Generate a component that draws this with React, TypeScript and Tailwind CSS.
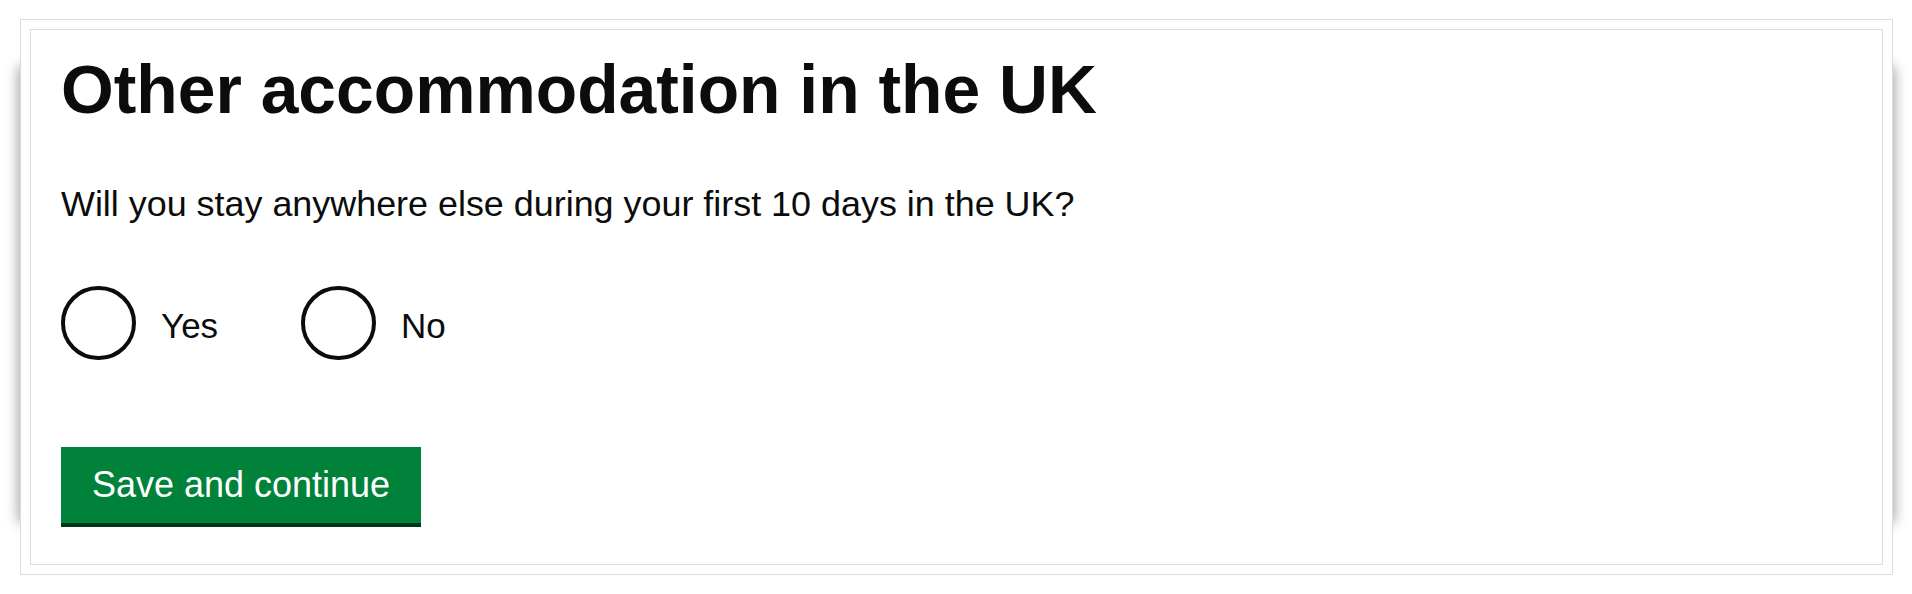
import React from "react";

function Radio({ label }: { label: string }) {
  return (
    <label className="flex w-[240px] items-center">
      <span className="block h-[74px] w-[75px] shrink-0 rounded-full border-[4px] border-[#0b0c0c] bg-white" />
      <span className="ml-[25px] pt-[6px] text-[35px] leading-[40px] text-[#0b0c0c]">{label}</span>
    </label>
  );
}

export default function App() {
  return (
    <div
      className="h-[594px] w-[1912px] bg-white pl-[20px] pt-[19px]"
      style={{ fontFamily: '"Liberation Sans", Arial, sans-serif' }}
    >
      <div className="relative h-[556px] w-[1873px]">
        <div className="absolute inset-x-[1px] bottom-[55px] top-[50px] shadow-[0_0_12px_3px_rgba(0,0,0,0.35)]" />
        <div className="relative flex h-full w-full flex-col border border-[#dcdcdc] bg-white p-[9px]">
          <div className="flex-1 border border-[#dcdcdc] bg-white pl-[30px] pt-[26px]">
            <h1 className="text-[67.8px] font-bold leading-[68px] text-[#0b0c0c]">
              Other accommodation in the UK
            </h1>
            <p className="mt-[60px] text-[35.9px] leading-[40px] text-[#0b0c0c]">
              Will you stay anywhere else during your first 10 days in the UK?
            </p>
            <div className="mt-[62px] flex">
              <Radio label="Yes" />
              <Radio label="No" />
            </div>
            <button
              type="button"
              className="mt-[87px] flex h-[80px] w-[360px] items-center justify-center border-b-[4px] border-[#003618] bg-[#00823b] text-[36px] leading-[40px] text-white"
            >
              Save and continue
            </button>
          </div>
        </div>
      </div>
    </div>
  );
}
